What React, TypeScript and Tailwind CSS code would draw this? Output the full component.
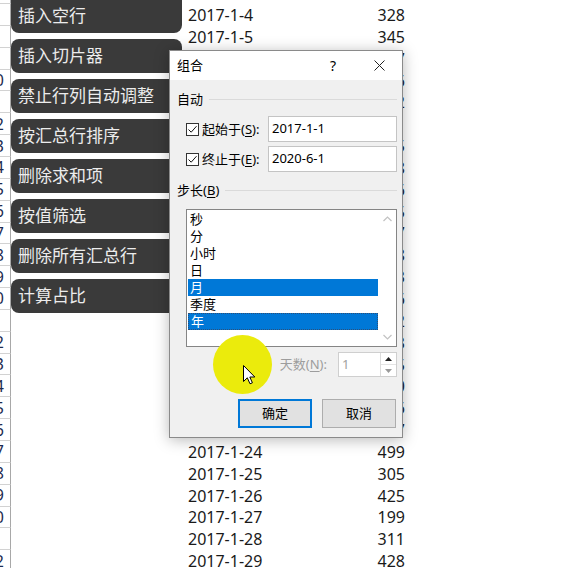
import { Fragment } from 'react';

const menuItems = [
  '插入空行',
  '插入切片器',
  '禁止行列自动调整',
  '按汇总行排序',
  '删除求和项',
  '按值筛选',
  '删除所有汇总行',
  '计算占比',
];

const values = [
  312, 328, 345, 287, 366, 452, 391, 275, 408, 436, 315, 367, 298, 483, 356, 402, 273, 325, 460, 386, 417,
  499, 305, 425, 199, 311, 428,
];

const stubDigits = [
  '', '', '', '', '0', '', '2', '3', '4', '5', '6', '7', '8', '9', '0', '', '2', '3', '4', '5', '6', '7', '8',
  '9', '0', '', '2',
];

// rows start one above the fold so 2017-1-4 sits at the top
const rows = values.map((v, i) => ({
  date: `2017-1-${i + 3}`,
  value: v,
  stub: stubDigits[i],
}));

const steps = [
  { label: '秒', on: false },
  { label: '分', on: false },
  { label: '小时', on: false },
  { label: '日', on: false },
  { label: '月', on: true },
  { label: '季度', on: false },
  { label: '年', on: true, focus: true },
];

function CheckBox() {
  return (
    <div className="w-[13px] h-[13px] border border-[#333] bg-white flex items-center justify-center">
      <svg width="11" height="11" viewBox="0 0 11 11">
        <polyline points="1.5,5.5 4.2,8.2 9.5,2.2" fill="none" stroke="#111" strokeWidth="1" />
      </svg>
    </div>
  );
}

function Section({ label, mnemonic }: { label: string; mnemonic?: string }) {
  return (
    <div className="flex items-center h-[16px] pl-[7px] pr-[5px]">
      <span className="leading-none">
        {label}
        {mnemonic && (
          <>
            (<span className="underline underline-offset-2">{mnemonic}</span>)
          </>
        )}
      </span>
      <div className="flex-1 h-px bg-[#dadada] ml-[6px]" />
    </div>
  );
}

function DateRow({ label, mnemonic, value, first }: { label: string; mnemonic: string; value: string; first?: boolean }) {
  return (
    <div className={`flex items-center h-[26px] pl-[16px] ${first ? 'mt-[9px]' : 'mt-[4px]'}`}>
      <CheckBox />
      <span className="ml-[3px] w-[66px] leading-none">
        {label}(<span className="underline underline-offset-2">{mnemonic}</span>):
      </span>
      <div className="w-[129px] h-[26px] border border-[#c4c4c4] bg-white flex items-center pl-[3px] text-[13px]">
        {value}
      </div>
    </div>
  );
}

function GroupDialog() {
  return (
    <div className="absolute left-[169px] top-[50px] w-[234px] border border-[#8a8a8a] bg-[#f0f0f0] shadow-[0_2px_14px_rgba(0,0,0,0.28)] z-20 font-['Noto_Sans','Noto_Sans_CJK_SC',sans-serif] text-[13px] text-black">
      <div className="h-[29px] bg-white flex items-center">
        <span className="pl-[7px] leading-none">组合</span>
        <div className="flex-1" />
        <div className="w-[46px] text-center leading-none text-[14px]">?</div>
        <div className="w-[46px] flex justify-center">
          <svg width="11" height="11" viewBox="0 0 11 11">
            <path d="M0.5 0.5L10.5 10.5M10.5 0.5L0.5 10.5" stroke="#222" strokeWidth="1" />
          </svg>
        </div>
      </div>

      <div className="pt-[11px] pb-[9px]">
        <Section label="自动" />
        <DateRow label="起始于" mnemonic="S" value="2017-1-1" first />
        <DateRow label="终止于" mnemonic="E" value="2020-6-1" />

        <div className="mt-[10px]">
          <Section label="步长" mnemonic="B" />
        </div>

        {/* list of step units */}
        <div className="mt-[11px] ml-[16px] w-[211px] h-[138px] border border-[#858585] bg-white flex">
          <div className="flex-1 pt-[0.5px] pl-px">
            {steps.map((s) => (
              <div
                key={s.label}
                className={`h-[17px] flex items-center pl-[2px] leading-none ${
                  s.on ? 'bg-[#0078d7] text-white' : ''
                } ${s.focus ? 'border border-dotted border-[#2d4f78]' : ''}`}
              >
                {s.label}
              </div>
            ))}
          </div>
          <div className="w-[18px] flex flex-col items-center justify-between py-[6px]">
            <svg width="9" height="6" viewBox="0 0 9 6">
              <polyline points="0.5,5 4.5,1 8.5,5" fill="none" stroke="#c2c2c2" strokeWidth="1.2" />
            </svg>
            <svg width="9" height="6" viewBox="0 0 9 6">
              <polyline points="0.5,1 4.5,5 8.5,1" fill="none" stroke="#c2c2c2" strokeWidth="1.2" />
            </svg>
          </div>
        </div>

        <div className="mt-[5px] flex items-center justify-end pr-[5px] h-[25px]">
          <span className="text-[#9d9d9d] leading-none mr-[11px]">
            天数(<span className="underline underline-offset-2">N</span>):
          </span>
          <div className="w-[59px] h-[25px] border border-[#cfcfcf] bg-white flex">
            <div className="flex-1 pl-[3px] flex items-center text-[#a0a0a0]">1</div>
            <div className="w-[16px] border-l border-[#dcdcdc] flex flex-col">
              <div className="flex-1 flex items-center justify-center border-b border-[#e4e4e4]">
                <svg width="7" height="4" viewBox="0 0 7 4">
                  <polygon points="0,4 3.5,0 7,4" fill="#222" />
                </svg>
              </div>
              <div className="flex-1 flex items-center justify-center">
                <svg width="7" height="4" viewBox="0 0 7 4">
                  <polygon points="0,0 3.5,4 7,0" fill="#9a9a9a" />
                </svg>
              </div>
            </div>
          </div>
        </div>

        <div className="mt-[22px] flex justify-end gap-[10px] pr-[6px]">
          <button className="w-[74px] h-[29px] border-2 border-[#0078d7] bg-[#e1e1e1] leading-none">确定</button>
          <button className="w-[74px] h-[29px] border border-[#adadad] bg-[#e1e1e1] leading-none">取消</button>
        </div>
      </div>
    </div>
  );
}

export default function App() {
  return (
    <div className="relative w-[568px] h-[568px] overflow-hidden bg-white font-['Noto_Sans',sans-serif]">
      {/* sheet behind */}
      <div className="-mt-[17.75px]">
        {rows.map((r) => (
          <div key={r.date} className="flex items-center h-[21.85px]">
            <div className="w-[11px] h-full border-r border-b border-r-[#a8a8a8] border-b-[#d2d2d2] overflow-hidden flex items-center justify-end pr-[6px] text-[16px] text-[#1d2b4f]">
              {r.stub}
            </div>
            <div className="w-[177px]" />
            <div className="w-[140px] text-[16px] text-[#1a1a1a]">{r.date}</div>
            <div className="w-[77px] text-right text-[16px] text-[#1a1a1a]">{r.value}</div>
          </div>
        ))}
      </div>

      {/* floating command list */}
      <div className="absolute left-[11px] top-[-8px] w-[171px] flex flex-col gap-[6px] z-10 font-['Noto_Sans_CJK_SC',sans-serif]">
        {menuItems.map((m, i) => (
          <Fragment key={m}>
            <div
              className={`bg-[#3a3a3a] text-[#ececec] text-[17px] leading-none flex items-center pl-[7px] pb-[4px] ${
                i === 0 ? 'h-[41px] pt-[7px] rounded-b-lg' : 'h-[34px] rounded-lg'
              }`}
            >
              {m}
            </div>
          </Fragment>
        ))}
      </div>

      <GroupDialog />

      {/* cursor highlight */}
      <div className="absolute left-[213px] top-[335px] w-[59px] h-[59px] rounded-full bg-[#ebeb0c] z-30" />
      <svg className="absolute left-[243px] top-[365px] z-40" width="14" height="21" viewBox="0 0 14 21">
        <path d="M0.5 0.5 L0.5 16.5 L4.3 12.8 L7 18.8 L9.4 17.8 L6.8 12 L11.8 12 Z" fill="#fff" stroke="#000" strokeWidth="1" />
      </svg>
    </div>
  );
}
